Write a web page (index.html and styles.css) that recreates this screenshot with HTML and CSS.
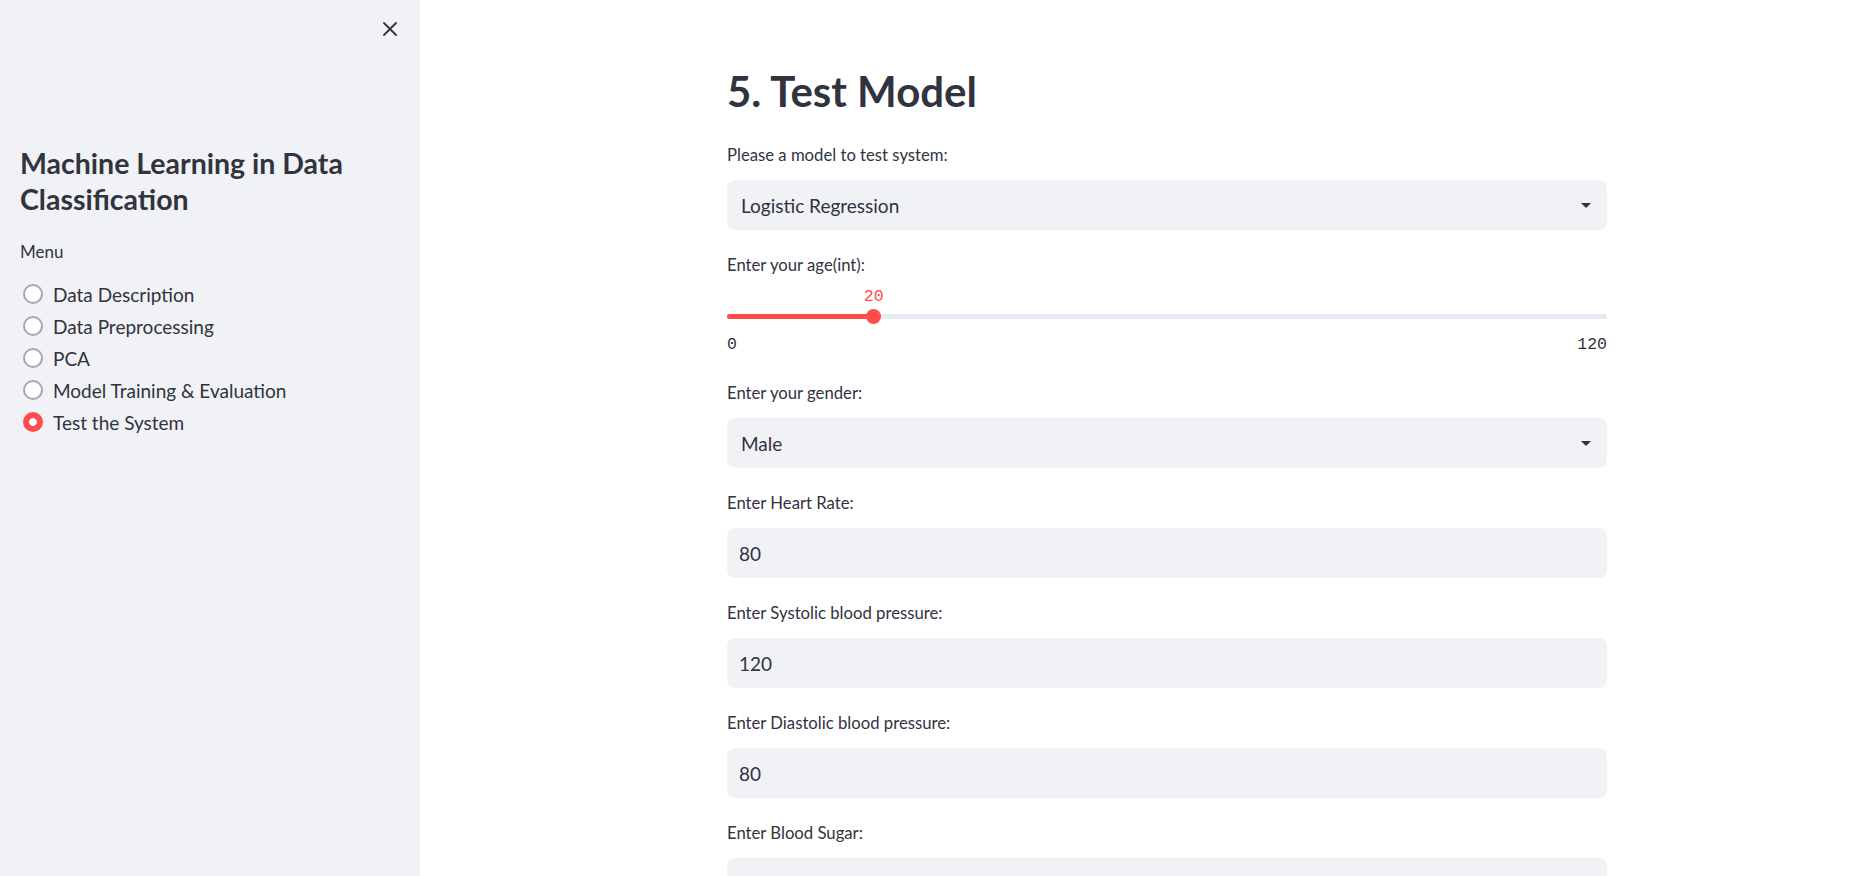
FILE: index.html
```html
<!DOCTYPE html>
<html>
<head>
<meta charset="utf-8">
<link rel="stylesheet" href="styles.css">
</head>
<body>
<aside class="sidebar">
  <div class="sidebar-header">
    <svg class="close-icon" width="14" height="14" viewBox="0 0 14 14"><path d="M1 1L13 13M13 1L1 13" stroke="#31333f" stroke-width="1.8" stroke-linecap="round"/></svg>
  </div>
  <h2 class="side-title">Machine Learning in Data Classification</h2>
  <div class="menu-label">Menu</div>
  <div class="radio-group">
    <div class="radio"><span class="radio-dot"></span><span>Data Description</span></div>
    <div class="radio"><span class="radio-dot"></span><span>Data Preprocessing</span></div>
    <div class="radio"><span class="radio-dot"></span><span>PCA</span></div>
    <div class="radio"><span class="radio-dot"></span><span>Model Training &amp; Evaluation</span></div>
    <div class="radio"><span class="radio-dot checked"></span><span>Test the System</span></div>
  </div>
</aside>
<main class="main">
  <div class="block">
    <h1 class="title">5. Test Model</h1>
    <div class="form">
      <div class="field">
        <div class="label">Please a model to test system:</div>
        <div class="select"><span>Logistic Regression</span><span class="caret"></span></div>
      </div>
      <div class="field">
        <div class="label">Enter your age(int):</div>
        <div class="slider">
          <div class="track">
            <div class="fill" style="width:16.667%">
              <div class="thumb"><span class="thumb-value">20</span></div>
            </div>
          </div>
          <div class="ticks"><span>0</span><span>120</span></div>
        </div>
      </div>
      <div class="field">
        <div class="label">Enter your gender:</div>
        <div class="select"><span>Male</span><span class="caret"></span></div>
      </div>
      <div class="field">
        <div class="label">Enter Heart Rate:</div>
        <div class="input">80</div>
      </div>
      <div class="field">
        <div class="label">Enter Systolic blood pressure:</div>
        <div class="input">120</div>
      </div>
      <div class="field">
        <div class="label">Enter Diastolic blood pressure:</div>
        <div class="input">80</div>
      </div>
      <div class="field">
        <div class="label">Enter Blood Sugar:</div>
        <div class="input"></div>
      </div>
    </div>
  </div>
</main>
</body>
</html>
```

FILE: styles.css
```css
* { box-sizing: border-box; }
html, body { margin: 0; padding: 0; }
body {
  display: flex;
  height: 876px;
  overflow: hidden;
  font-family: Lato, "Noto Sans", sans-serif;
  color: #31333f;
  background: #ffffff;
}
.sidebar {
  width: 420px;
  flex: 0 0 420px;
  background: #f0f2f6;
  padding: 0 0 0 20px;
}
.sidebar-header {
  display: flex;
  justify-content: flex-end;
  padding: 22px 23px 0 0;
  height: 36px;
}
.close-icon { display: block; }
.side-title {
  margin: 109px 0 0 0;
  font-size: 28.5px;
  line-height: 36px;
  font-weight: 700;
  color: #31333f;
}
.menu-label {
  margin-top: 23px;
  font-size: 17px;
  line-height: 24px;
}
.radio-group {
  margin-top: 14px;
  display: flex;
  flex-direction: column;
}
.radio {
  display: flex;
  align-items: center;
  gap: 10px;
  height: 32px;
  padding-left: 3px;
  font-size: 19px;
}
.radio-dot {
  width: 20px;
  height: 20px;
  border-radius: 50%;
  border: 2px solid #a3a8b4;
  background: #ffffff;
  flex: 0 0 20px;
}
.radio-dot.checked {
  border: none;
  background: radial-gradient(circle, #ffffff 0 3.5px, #ff4b4b 4.2px);
}
.main {
  flex: 1;
  padding: 65px 0 0 307px;
}
.block { width: 880px; }
.title {
  margin: 0 0 22px 0;
  font-size: 42px;
  line-height: 53px;
  font-weight: 700;
  color: #31333f;
}
.form {
  display: flex;
  flex-direction: column;
  gap: 20px;
}
.label {
  height: 30px;
  line-height: 30px;
  font-size: 16.7px;
  margin-bottom: 10px;
}
.select, .input {
  height: 50px;
  background: #f0f2f6;
  border-radius: 8px;
  display: flex;
  align-items: center;
  font-size: 19px;
}
.select { padding: 0 16px 0 14px; justify-content: space-between; }
.input { padding: 0 12px; }
.caret {
  width: 0; height: 0;
  border-left: 5px solid transparent;
  border-right: 5px solid transparent;
  border-top: 5px solid #31333f;
}
.slider { padding: 24px 0 3px 0; }
.track {
  height: 5px;
  background: #e6eaf1;
  border-radius: 3px;
}
.fill {
  height: 5px;
  background: #ff4b4b;
  border-radius: 3px;
  position: relative;
}
.thumb {
  position: absolute;
  right: -7.5px;
  top: -5px;
  width: 15px;
  height: 15px;
  border-radius: 50%;
  background: #ff4b4b;
}
.thumb-value {
  position: absolute;
  top: -22px;
  left: 50%;
  transform: translateX(-50%);
  font-family: "Liberation Mono", "DejaVu Sans Mono", monospace;
  font-size: 16.5px;
  line-height: 20px;
  color: #ff4b4b;
}
.ticks {
  display: flex;
  justify-content: space-between;
  margin-top: 16px;
  font-family: "Liberation Mono", "DejaVu Sans Mono", monospace;
  font-size: 16.5px;
  line-height: 20px;
}
```
